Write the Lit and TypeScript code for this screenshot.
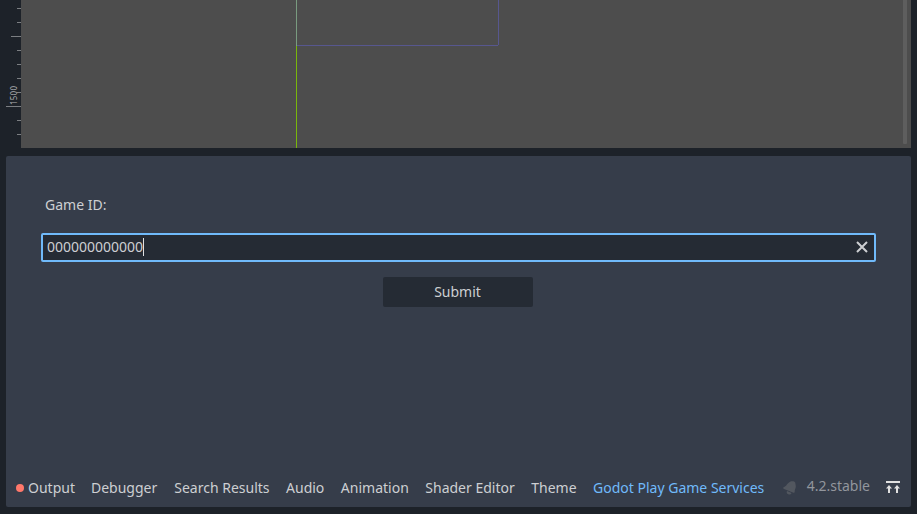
import { LitElement, html, css, svg } from "lit";
import { customElement, state } from "lit/decorators.js";

const TABS = ["Output", "Debugger", "Search Results", "Audio", "Animation", "Shader Editor", "Theme", "Godot Play Game Services"];

@customElement("canvas-ruler")
class CanvasRuler extends LitElement {
  static styles = css`
    :host { display: block; width: 21px; height: 148px; }
    svg { display: block; }
    text { font-family: "Noto Sans", sans-serif; font-size: 8px; fill: #b0b2b5; }
  `;
  render() {
    const ticks = Array.from({ length: 10 }, (_, i) => {
      const length = i === 7 ? 15 : i === 2 ? 10 : 4;
      return svg`<rect x=${21 - length} y=${8 + i * 14} width=${length} height="1" fill="#7b7e82"/>`;
    });
    return html`<svg width="21" height="148">${ticks}
      <text transform="translate(17 105) rotate(-90)" textLength="19" lengthAdjust="spacing">1500</text></svg>`;
  }
}

@customElement("editor-canvas")
class EditorCanvas extends LitElement {
  static styles = css`
    :host { display: block; flex: 1; height: 148px; background: #4d4d4d; }
    svg { display: block; }
  `;
  render() {
    return html`<svg width="890" height="148">
      <rect x="275" y="45" width="202" height="1" fill="#57578f"/>
      <rect x="477" y="0" width="1" height="45" fill="#57578f"/>
      <rect x="275" y="0" width="1" height="46" fill="#799b80"/>
      <rect x="275" y="46" width="1" height="102" fill="#79b70b"/>
      <rect x="882" y="-6" width="4" height="150" rx="1" fill="#5e5e5e"/>
    </svg>`;
  }
}

@customElement("app-root")
class AppRoot extends LitElement {
  static styles = css`
    :host {
      display: flex; flex-direction: column; box-sizing: border-box;
      width: 917px; height: 514px; overflow: hidden; background: #1d2229;
      color: #cdcfd2; font: 14px/20px "Noto Sans", sans-serif; white-space: nowrap;
    }
    .viewport { display: flex; height: 148px; padding-right: 6px; }
    .panel {
      display: flex; flex-direction: column; box-sizing: border-box;
      height: 351px; margin: 8px 6px 7px; border-radius: 2px; background: #363d4a;
    }
    .form { display: flex; flex-direction: column; flex: 1; padding: 39px 35px 0; }
    .label { padding-left: 4px; height: 20px; }
    .field {
      display: flex; align-items: flex-start; box-sizing: border-box; height: 29px;
      margin-top: 18px; padding: 2px 4px 0;
      border: 2px solid #70bafa; border-radius: 2px; background: #252b34;
    }
    .value { flex: 1; display: flex; align-items: flex-start; }
    .caret { width: 1px; height: 18px; margin-top: 1px; background: #dfe0e2; }
    .clear { margin-top: 2px; }
    .submit {
      width: 150px; height: 30px; margin: 15px 0 0 342px; padding: 0 1px 0 0;
      border: 0; border-radius: 2px; background: #252b34; color: inherit; font: inherit; line-height: 30px;
    }
    .bar { display: flex; align-items: center; height: 38px; padding: 0 10px; }
    .tabs { display: flex; gap: 16.5px; }
    .tab { display: flex; align-items: center; }
    .tab:first-child { margin-right: -0.5px; }
    .tab:nth-child(2) { margin-right: 0.5px; }
    .dot { width: 8px; height: 8px; margin-right: 4px; border-radius: 50%; background: #ff786b; }
    .active { color: #70bafa; }
    .status { display: flex; align-items: center; margin-left: auto; }
    .version { margin: -4px 15px 0 9px; color: #92969d; }
    svg { display: block; }
  `;

  @state() private activeTab = "Godot Play Game Services";

  render() {
    return html`
      <div class="viewport"><canvas-ruler></canvas-ruler><editor-canvas></editor-canvas></div>
      <div class="panel">
        <div class="form">
          <div class="label">Game ID:</div>
          <div class="field">
            <div class="value"><span class="digits">000000000000</span><span class="caret"></span></div>
            <svg class="clear" width="16" height="16" viewBox="0 0 16 16"><path d="M3 3l10 10M13 3L3 13" stroke="#cdcfd2" stroke-width="2"/></svg>
          </div>
          <button class="submit">Submit</button>
        </div>
        <div class="bar">
          <div class="tabs">
            ${TABS.map((name) => html`<div class="tab ${name === this.activeTab ? "active" : ""}" @click=${() => (this.activeTab = name)}>
              ${name === "Output" ? html`<span class="dot"></span>` : ""}<span>${name}</span></div>`)}
          </div>
          <div class="status">
            <svg width="16" height="16" viewBox="0 0 16 16" fill="#52575f">
              <path d="M8.500 1.500C10 1 12.500 1 13.200 2.500L13.800 6C14 8 12.600 9.600 12.700 11C12.800 12 12.600 13 11.500 12.800L2 8.900C.9 8.400 1 7.200 2.200 6.900C4.500 6.500 5 3 8.500 1.500z"/>
              <path d="M5 11l4.600 2a2.500 2.500 0 0 1-4.600-2z"/>
            </svg>
            <span class="version">4.2.stable</span>
            <svg width="16" height="16" viewBox="0 0 16 16" fill="#e0e0e0">
              <path d="M1 1h14v2H1zM4 5l3 3.500H5V13H3V8.500H1zM12 5l3 3.500h-2V13h-2V8.500H9z"/>
            </svg>
          </div>
        </div>
      </div>`;
  }
}
